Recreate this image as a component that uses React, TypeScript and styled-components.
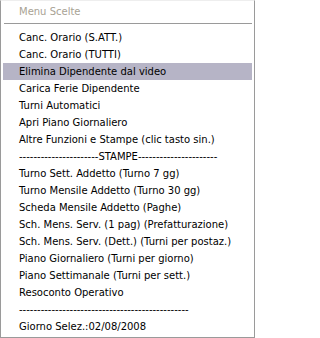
import React from "react";
import styled, { createGlobalStyle } from "styled-components";

const GlobalStyle = createGlobalStyle`
  html, body {
    margin: 0;
    padding: 0;
    background: #ffffff;
  }
`;

interface MenuEntry {
  label: string;
  active?: boolean;
}

const entries: MenuEntry[] = [
  { label: "Canc. Orario (S.ATT.)" },
  { label: "Canc. Orario (TUTTI)" },
  { label: "Elimina Dipendente dal video", active: true },
  { label: "Carica Ferie Dipendente" },
  { label: "Turni Automatici" },
  { label: "Apri Piano Giornaliero" },
  { label: "Altre Funzioni e Stampe (clic tasto sin.)" },
  { label: "----------------------STAMPE----------------------" },
  { label: "Turno Sett. Addetto (Turno 7 gg)" },
  { label: "Turno Mensile Addetto (Turno 30 gg)" },
  { label: "Scheda Mensile Addetto (Paghe)" },
  { label: "Sch. Mens. Serv. (1 pag) (Prefatturazione)" },
  { label: "Sch. Mens. Serv. (Dett.) (Turni per postaz.)" },
  { label: "Piano Giornaliero (Turni per giorno)" },
  { label: "Piano Settimanale (Turni per sett.)" },
  { label: "Resoconto Operativo" },
  { label: "-----------------------------------------------" },
  { label: "Giorno Selez.:02/08/2008" },
];

export default function App() {
  return <>
    <GlobalStyle/>
    <Menu>
      <Title>Menu Scelte</Title>
      <Separator/>
      <List>
        {entries.map((entry, i) =>
          <Item key={i} $active={entry.active}>{entry.label}</Item>
        )}
      </List>
    </Menu>
  </>;
}

const Menu = styled.div`
  box-sizing: border-box;
  width: 255px;
  height: 338px;
  background: #ffffff;
  border: 1px solid #9a9a9a;
  border-top-color: #eeeeee;
  padding: 0 2px;
  font-family: "DejaVu Sans", sans-serif;
  font-size: 10px;
  color: #000000;
  overflow: hidden;
`;

const Title = styled.div`
  height: 22px;
  line-height: 22px;
  padding-left: 16px;
  color: #a8a294;
`;

const Separator = styled.div`
  height: 1px;
  margin: 0 0 5px 1px;
  background: #9a9a9a;
`;

const List = styled.div`
  display: flex;
  flex-direction: column;
`;

const Item = styled.div<{ $active?: boolean }>`
  height: 17px;
  line-height: 17px;
  padding-left: 16px;
  white-space: nowrap;
  background: ${p => p.$active ? "#b6b4c6" : "transparent"};
`;
